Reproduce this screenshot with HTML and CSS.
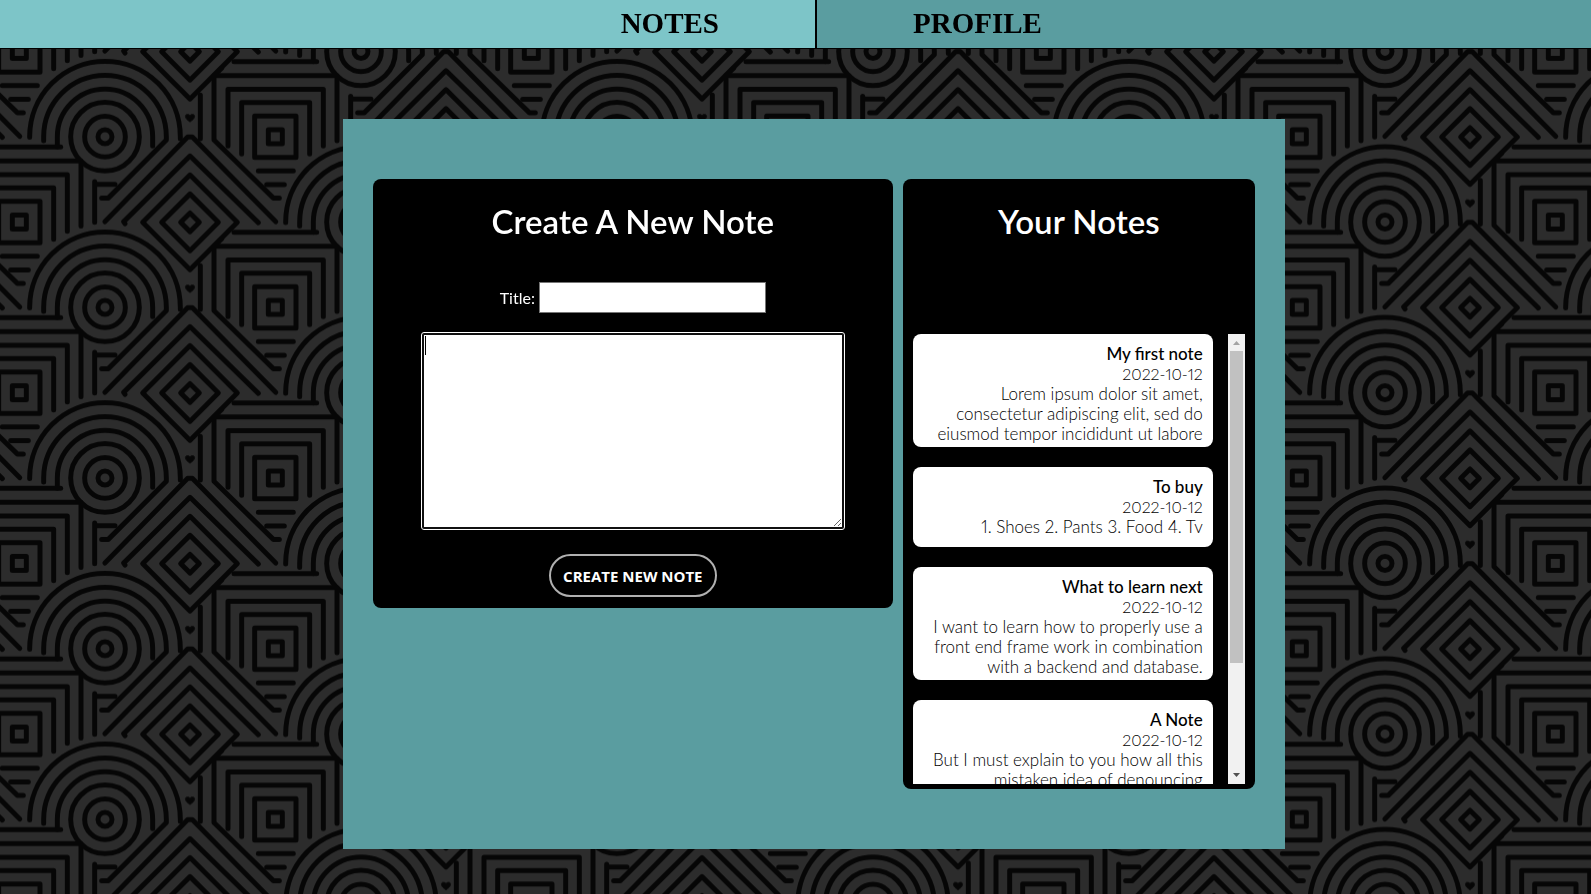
FILE: index.html
```html
<!DOCTYPE html>
<html lang="en">
<head>
<meta charset="utf-8">
<title>Notes</title>
<link rel="stylesheet" href="styles.css">
</head>
<body>
<svg class="backdrop" aria-hidden="true">
  <defs>
    <g id="motif">
      <circle cx="315" cy="290" r="21"/>
      <circle cx="315" cy="290" r="61"/>
      <circle cx="315" cy="290" r="103"/>
      <path d="M172 321V290A143 143 0 0 1 458 290V318"/>
      <path d="M131 302V290A184 184 0 0 1 499 290V300L325 474H305"/>
      <path d="M89 292V290A226 226 0 0 1 541 290V296"/>
      <path d="M345 433H292M284 425V547"/>
      <path d="M570 519L598 547L570 575L542 547Z"/>
      <path d="M570 462L655 547L570 632L485 547Z"/>
      <path d="M570 405L712 547L570 689L428 547Z"/>
      <path d="M375 551L371 545L570 348L775 548"/>
      <path d="M315 545L563 291H577L827 545"/>
      <path d="M601 165V296M642 107V300L820 474H838M642 107L665 84"/>
      <path d="M642 107H1011V302"/>
      <path d="M702 65H950"/>
      <path d="M684 318V148H970V318"/>
      <path d="M725 342V188H929V342"/>
      <rect x="764" y="228" width="124" height="124"/>
      <rect x="805" y="269" width="42" height="42"/>
      <path d="M775 393H880M800 434H853"/>
      <path class="heart" d="M570 226C566 221 556 221 556 229C556 236 564 242 570 246C576 242 584 236 584 229C584 221 574 221 570 226Z"/>
    </g>
    <g id="column">
      <use href="#motif" y="-512"/><use href="#motif"/><use href="#motif" y="512"/>
    </g>
    <pattern id="tiles" width="1536" height="512" patternUnits="userSpaceOnUse" patternTransform="scale(0.33333)">
      <rect class="ground" width="1536" height="512"/>
      <g class="strokes" transform="translate(0 120)">
        <use href="#column"/>
        <use href="#column" x="768" y="-256"/>
        <use href="#column" x="-768" y="-256"/>
      </g>
    </pattern>
  </defs>
  <rect width="100%" height="100%" fill="url(#tiles)"/>
</svg>

<nav class="tabs">
  <a class="tab tab-notes" href="#notes">NOTES</a>
  <a class="tab tab-profile" href="#profile">PROFILE</a>
</nav>

<main class="page">
  <div class="board">
    <section class="card">
      <h1>Create A New Note</h1>
      <form class="form">
        <div class="title-row">
          <label for="title">Title:</label>
          <input id="title" type="text">
        </div>
        <div class="editor">
          <textarea id="body" aria-label="Note text"></textarea>
          <span class="caret"></span>
        </div>
        <button class="create" type="button">CREATE NEW NOTE</button>
      </form>
    </section>

    <section class="card" id="notes">
      <h1>Your Notes</h1>
      <div class="scroller">
        <div class="list">
          <article class="note">
            <h2>My first note</h2>
            <time>2022-10-12</time>
            <p>Lorem ipsum dolor sit amet,<br>consectetur adipiscing elit, sed do<br>eiusmod tempor incididunt ut labore</p>
          </article>
          <article class="note">
            <h2>To buy</h2>
            <time>2022-10-12</time>
            <p>1. Shoes 2. Pants 3. Food 4. Tv</p>
          </article>
          <article class="note">
            <h2>What to learn next</h2>
            <time>2022-10-12</time>
            <p>I want to learn how to properly use a<br>front end frame work in combination<br>with a backend and database.</p>
          </article>
          <article class="note">
            <h2>A Note</h2>
            <time>2022-10-12</time>
            <p>But I must explain to you how all this<br>mistaken idea of denouncing</p>
          </article>
        </div>
        <div class="scrollbar" aria-hidden="true">
          <svg class="arrow" viewBox="0 0 17 17"><path d="M5 11L8.500 7L12 11Z" fill="#a3a3a3"/></svg>
          <div class="track"><div class="thumb"></div></div>
          <svg class="arrow" viewBox="0 0 17 17"><path d="M5 6L8.500 10L12 6Z" fill="#505050"/></svg>
        </div>
      </div>
    </section>
  </div>
</main>
</body>
</html>
```
FILE: styles.css
```css
* { box-sizing: border-box; }

body {
  margin: 0;
  min-height: 100vh;
  background: #2c2c2c;
  color: #000;
  font: 300 17px/20px Lato, "Open Sans", sans-serif;
}

.backdrop {
  position: fixed;
  inset: 0;
  z-index: -1;
  width: 100%;
  height: 100%;
}
.ground { fill: #2c2c2c; }
.strokes {
  fill: none;
  stroke: #060606;
  stroke-width: 15px;
  stroke-linecap: round;
  stroke-linejoin: round;
}
.heart { fill: #060606; stroke-width: 2px; }

.tabs {
  display: grid;
  grid-template-columns: 817fr 774fr;
  border-bottom: 1px solid #000;
}
.tab {
  padding: 0 96px;
  color: #000;
  font: 700 29px/46px "Liberation Serif", serif;
  padding-bottom: 2px;
  text-decoration: none;
}
.tab-notes {
  background: #7dc5c8;
  border-right: 2px solid #000;
  text-align: right;
}
.tab-profile { background: #5a9da0; }

.page { padding: 70px 19.25% 45px 21.55%; }
.board {
  display: grid;
  grid-template-columns: 65fr 44fr;
  align-items: start;
  gap: 10px;
  padding: 60px 30px;
  background: #5a9da0;
}
.card {
  min-width: 0;
  padding: 22px 10px 5px;
  background: #000;
  border-radius: 8px;
}
h1 {
  margin: 0;
  color: #fff;
  font-size: 33px;
  font-weight: 600;
  line-height: 40px;
  text-align: center;
}

.form {
  display: flex;
  flex-direction: column;
  align-items: center;
  padding: 41px 0 6px;
}
.title-row {
  display: flex;
  align-items: center;
  gap: 4px;
  color: #fff;
  font-size: 16px;
  font-weight: 400;
}
.title-row input {
  width: 227px;
  height: 31px;
  padding: 2px;
  border: 1px solid #767676;
  background: #fff;
  font: inherit;
}
.editor {
  position: relative;
  align-self: stretch;
  margin: 20px 39px 25px;
}
.editor textarea {
  display: block;
  width: 100%;
  height: 196px;
  padding: 2px;
  border: 2px solid #101010;
  border-radius: 2px;
  outline: 1px solid #fff;
  background: #fff;
  font: inherit;
}
.caret {
  position: absolute;
  top: 3px;
  left: 3px;
  width: 1px;
  height: 19px;
  background: #000;
}
.create {
  height: 43px;
  padding: 0 12px;
  border: 2px solid #b0b0b0;
  border-radius: 22px;
  background: #000;
  color: #fff;
  font: 700 15px/20px "Open Sans", sans-serif;
}

.scroller {
  display: grid;
  grid-template-columns: 1fr 17px;
  height: 450px;
  margin-top: 93px;
}
.list {
  display: flex;
  flex-direction: column;
  gap: 20px;
  height: 450px;
  padding-right: 15px;
  overflow: hidden;
}
.note {
  flex: none;
  max-height: 113px;
  padding: 10px;
  overflow: hidden;
  border-radius: 8px;
  background: #fff;
  font-variant-numeric: proportional-nums;
  text-align: right;
  white-space: nowrap;
}
.note h2 {
  margin: 0;
  font-size: 17px;
  font-weight: 500;
}
.note time {
  display: block;
  font-size: 16px;
}
.note p { margin: 0; }

.scrollbar {
  display: flex;
  flex-direction: column;
  background: #f1f1f1;
}
.arrow { width: 17px; height: 17px; }
.track { flex: 1; padding: 0 2px; }
.thumb { height: 75%; background: #c1c1c1; }
```
